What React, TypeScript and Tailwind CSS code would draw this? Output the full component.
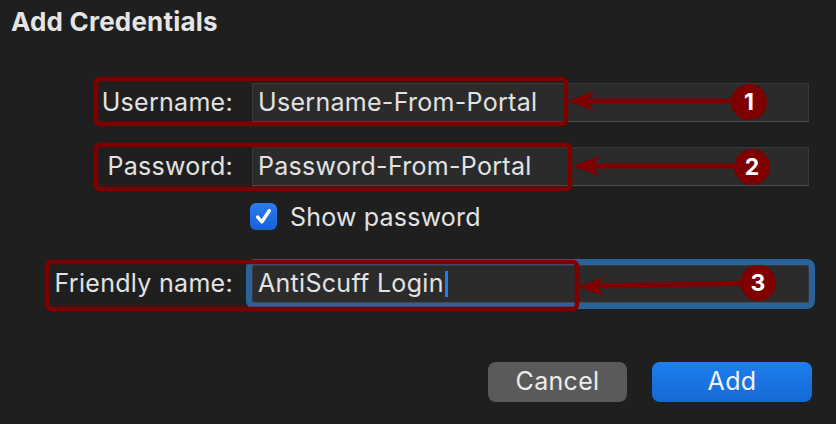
import React from "react";

const fieldBase =
    "flex items-center bg-[#2b2b2b] border border-[#393939] border-b-[#4a4a4a] px-[5px] text-[25px] tracking-[0.3px] text-[#e2e2e2]";

function Field({ label, value }: { label: string; value: string }) {
    return (
        <div className="flex items-center">
            <label className="w-[233px] text-right text-[25px] tracking-[0.3px] text-[#e2e2e2]">{label}</label>
            <div className={`${fieldBase} ml-[19px] w-[557px] h-[39px]`}>{value}</div>
        </div>
    );
}

export default function App() {
    return (
        <div className="relative w-[836px] h-[424px] overflow-hidden bg-[#1f1f1f] font-['Inter',sans-serif] text-[#e2e2e2]">
            <h1 className="pl-[11px] pt-[7px] text-[26px] font-bold leading-[30px] tracking-[0.2px] text-[#e4e4e4]">Add Credentials</h1>

            {/* Form */}
            <div className="mt-[46px] flex flex-col">
                <Field label="Username:" value="Username-From-Portal" />
                <div className="mt-[25px]">
                    <Field label="Password:" value="Password-From-Portal" />
                </div>

                <div className="mt-[17px] ml-[250px] flex items-center h-[27px]">
                    <span className="flex items-center justify-center w-[27px] h-[27px] rounded-[6px] bg-gradient-to-b from-[#2a7cf0] to-[#1861d6]">
                        <svg width="19" height="19" viewBox="0 0 18 18" fill="none">
                            <path d="M3.5 9.5 L7.5 14 L14.5 3.5" stroke="white" strokeWidth="3.2" strokeLinecap="round" strokeLinejoin="round" />
                        </svg>
                    </span>
                    <span className="ml-[13px] text-[25px] tracking-[0.2px] leading-[27px] pt-[2px]">Show password</span>
                </div>

                <div className="mt-[35px] flex items-center">
                    <label className="w-[233px] text-right text-[25px] tracking-[0.3px]">Friendly name:</label>
                    <div className={`${fieldBase} ml-[19px] w-[557px] h-[38px] border-[#4f8cbc] rounded-[2px] outline-[6px] outline-solid outline-[#28649a]`}>
                        <span>AntiScuff Login</span>
                        <span className="ml-[1px] w-[3px] h-[26px] bg-[#1a80f2]" />
                    </div>
                </div>
            </div>

            {/* Buttons */}
            <div className="mt-[59px] flex justify-end gap-[25px] pr-[24px]">
                <button className="w-[139px] h-[40px] rounded-[8px] bg-[#5a5a5a] text-[25px] tracking-[0.3px] text-[#ececec]">Cancel</button>
                <button className="w-[160px] h-[40px] rounded-[8px] bg-gradient-to-b from-[#1d7ff0] to-[#1669d4] text-[25px] tracking-[0.3px] text-[#f2f2f2]">Add</button>
            </div>

            {/* Annotations */}
            <svg className="absolute inset-0 pointer-events-none" width="836" height="424">
                <g fill="none" stroke="#7e0000" strokeWidth="4.5">
                    <rect x="96" y="79" width="470" height="45" rx="4" />
                    <rect x="96" y="145" width="474" height="44" rx="4" />
                    <rect x="47" y="262" width="530" height="47" rx="4" />
                </g>
                <g stroke="#7e0000" strokeWidth="5">
                    <line x1="740" y1="101" x2="588" y2="101" />
                    <line x1="742" y1="166" x2="594" y2="166" />
                    <line x1="748" y1="283" x2="598" y2="286" />
                </g>
                <g fill="#7e0000">
                    <polygon points="568,101 594,91 588,101 594,111" />
                    <polygon points="572,166 600,156 593,166 600,176" />
                    <polygon points="578,287 604,277 597,286 604,296" />
                    <circle cx="749" cy="102" r="18" />
                    <circle cx="752" cy="167" r="18" />
                    <circle cx="758" cy="283" r="18" />
                </g>
                <g fill="#ffffff" fontFamily="Inter, sans-serif" fontWeight="700" fontSize="23" textAnchor="middle">
                    <text x="749" y="110">1</text>
                    <text x="752" y="175">2</text>
                    <text x="758" y="291">3</text>
                </g>
            </svg>
        </div>
    );
}
